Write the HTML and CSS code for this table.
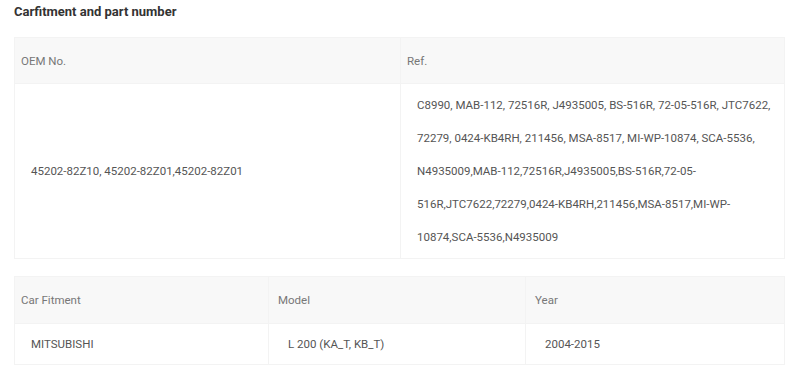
FILE: index.html
```html
<!DOCTYPE html>
<html>
<head>
<meta charset="utf-8">
<link rel="stylesheet" href="styles.css">
</head>
<body>
<div class="page">
  <h2 class="title">Carfitment and part number</h2>
  <table class="tbl oem">
    <tr class="head">
      <td class="c-first">OEM No.</td>
      <td>Ref.</td>
    </tr>
    <tr class="body">
      <td class="c-first">45202-82Z10, 45202-82Z01,45202-82Z01</td>
      <td class="refs">C8990, MAB-112, 72516R, J4935005, BS-516R, 72-05-516R, JTC7622, 72279, 0424-KB4RH, 211456, MSA-8517, MI-WP-10874, SCA-5536, N4935009,MAB-112,72516R,J4935005,BS-516R,72-05-516R,JTC7622,72279,0424-KB4RH,211456,MSA-8517,MI-WP-10874,SCA-5536,N4935009</td>
    </tr>
  </table>
  <table class="tbl fit">
    <tr class="head">
      <td class="c-first">Car Fitment</td>
      <td>Model</td>
      <td>Year</td>
    </tr>
    <tr class="body">
      <td class="c-first">MITSUBISHI</td>
      <td>L 200 (KA_T, KB_T)</td>
      <td>2004-2015</td>
    </tr>
  </table>
</div>
</body>
</html>
```

FILE: styles.css
```css
html, body {
  margin: 0;
  padding: 0;
  background: #fff;
}
.page {
  font-family: Roboto, "Liberation Sans", sans-serif;
  padding: 2px 15px 0 14px;
  width: 771px;
  border-right: 1px solid #f1f1f1;
  min-height: 373px;
}
.title {
  margin: 0 0 16px 0;
  font-size: 13px;
  line-height: 19px;
  font-weight: 700;
  color: #333;
}
.tbl {
  width: 771px;
  border-collapse: collapse;
  table-layout: fixed;
  font-size: 11.5px;
}
.tbl td {
  box-sizing: border-box;
  border: 1px solid #f3f3f3;
  vertical-align: middle;
  padding: 0;
}
.head td {
  background: #f8f8f8;
  color: #777;
  height: 46px;
  padding-left: 6px;
}
.body td {
  color: #555;
  padding-left: 19px;
  padding-right: 17px;
}
.body td.c-first {
  padding-left: 16px;
}
.oem .body td.refs {
  padding-left: 16px;
  padding-right: 6px;
  line-height: 33px;
  padding-top: 5px;
  padding-bottom: 4px;
}
.oem {
  margin-bottom: 17px;
}
.oem td:first-child {
  width: 386px;
}
.fit td:first-child {
  width: 254px;
}
.fit td:nth-child(2) {
  width: 257px;
}
.fit .head td {
  height: 47px;
  padding-left: 9px;
}
.fit .head td.c-first {
  padding-left: 6px;
}
.fit .body td {
  height: 41px;
  padding-left: 19px;
}
.fit .body td.c-first {
  padding-left: 16px;
}
```
